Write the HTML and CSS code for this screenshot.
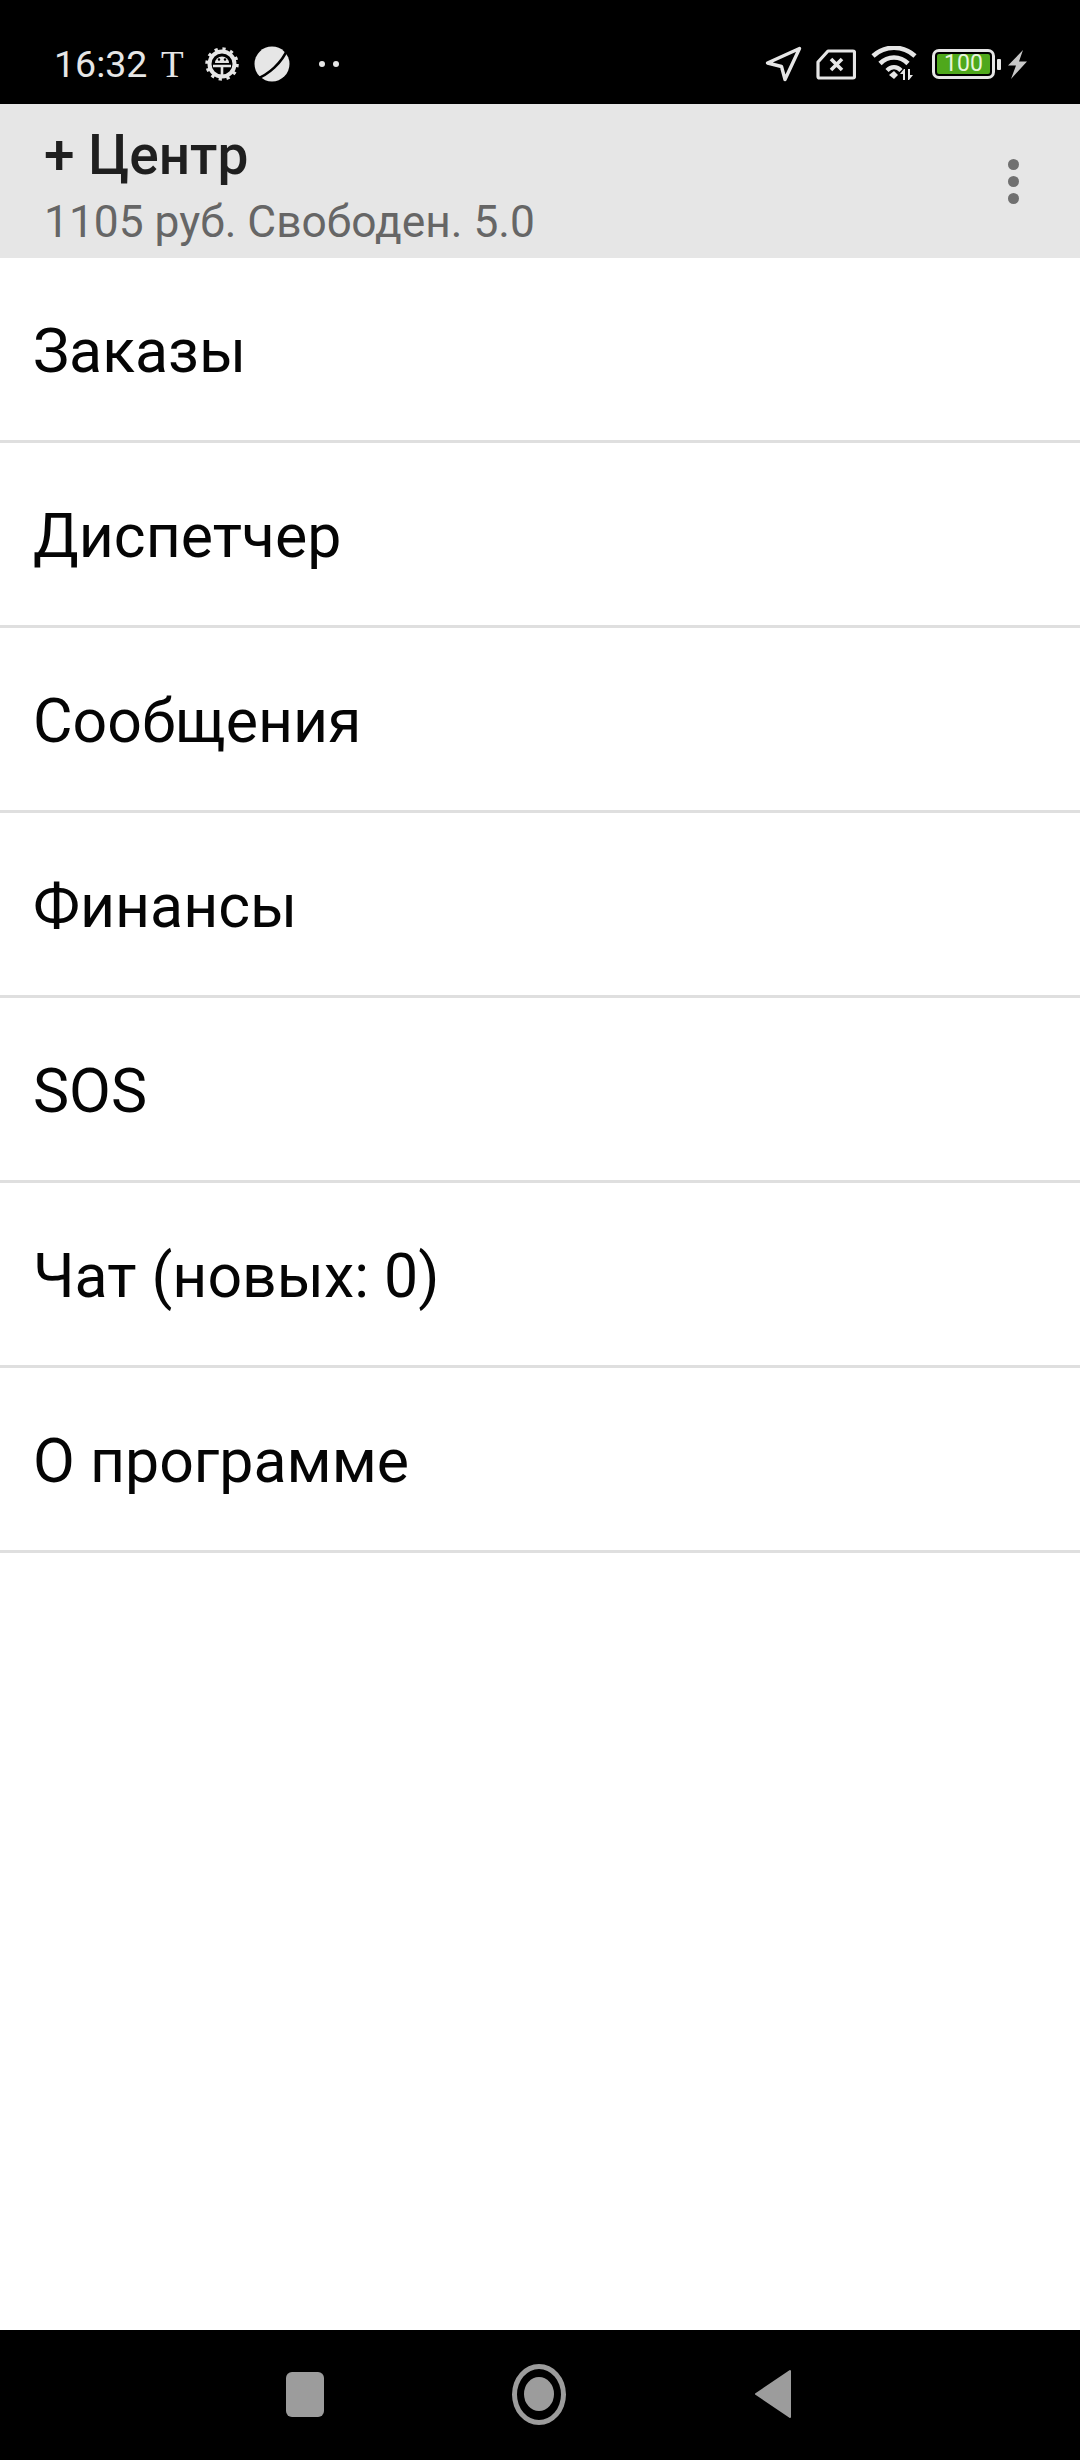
FILE: index.html
```html
<!DOCTYPE html>
<html lang="ru">
<head>
  <meta charset="UTF-8" />
  <title>Центр</title>
  <link rel="stylesheet" href="styles.css">
</head>
<body>
  <div class="phone">
    <div class="status-bar">
      <div class="status-left">
        <span class="clock">16:32</span>
        <span class="t-icon">T</span>
        <svg class="ic-gear" width="34" height="34" viewBox="1 1 34 34">
          <circle cx="18" cy="18" r="12.5" fill="none" stroke="#e6e6e6" stroke-width="4"/>
          <circle cx="18" cy="18" r="15" fill="none" stroke="#e6e6e6" stroke-width="3.5" stroke-dasharray="3.2 4.65"/>
          <path d="M9 20h18M18 20v10" stroke="#e6e6e6" stroke-width="2.6" fill="none"/>
          <path d="M11 17a7 6.5 0 0 1 14 0z" fill="#e6e6e6"/>
          <circle cx="15" cy="13.5" r="1.2" fill="#000"/>
          <circle cx="21" cy="13.5" r="1.2" fill="#000"/>
        </svg>
        <svg class="ic-planet" width="36" height="36" viewBox="0 0 36 36">
          <circle cx="18" cy="18" r="17.500" fill="#e6e6e6"/>
          <path d="M2 33 C14 29 28 17 34 2" stroke="#000" stroke-width="2.600" fill="none"/>
        </svg>
        <span class="dots"><i></i><i></i></span>
      </div>
      <div class="status-right">
        <svg class="ic-nav" width="37" height="36" viewBox="0 0 37 36">
          <path d="M2.500 17 L34.500 2.500 L20 33.500 L16.500 20.500 Z" fill="none" stroke="#e6e6e6" stroke-width="3.400" stroke-linejoin="round"/>
        </svg>
        <svg class="ic-sim" width="40" height="31" viewBox="0 0 40 31">
          <path d="M12 2 H37 a1.500 1.500 0 0 1 1.500 1.500 V27.500 a1.500 1.500 0 0 1 -1.500 1.500 H3.500 a1.500 1.500 0 0 1 -1.500 -1.500 V13 Z" fill="none" stroke="#e6e6e6" stroke-width="3.200" stroke-linejoin="round"/>
          <path d="M15 10 L26 21 M26 10 L15 21" stroke="#e6e6e6" stroke-width="3.600"/>
        </svg>
        <svg class="ic-wifi" width="46" height="36" viewBox="0 0 46 36">
          <path d="M2 10 C14 -1 32 -1 44 10" fill="none" stroke="#e6e6e6" stroke-width="4.600"/>
          <path d="M9 17.500 C17 9.500 29 9.500 37 17.500" fill="none" stroke="#e6e6e6" stroke-width="4.600"/>
          <path d="M16 24.500 C20 20 26 20 30 24.500" fill="none" stroke="#e6e6e6" stroke-width="4.200"/>
          <path d="M18 29 L23 25 L27 29 L23 33 Z" fill="#e6e6e6"/>
          <path d="M33 23 L29 28 H32 V34 H34 V23 Z M38 34 L42 29 H39 V23 H37 V34 Z" fill="#e6e6e6"/>
        </svg>
        <div class="battery">
          <div class="battery-body"><span class="battery-level">100</span></div>
          <div class="battery-cap"></div>
        </div>
        <svg class="ic-bolt" width="19" height="29" viewBox="0 0 19 29">
          <path d="M15 0 L0 15.500 H8 L3 29 L19 11.500 H11 Z" fill="#c8c8c8"/>
        </svg>
      </div>
    </div>

    <header class="app-bar">
      <div class="app-titles">
        <div class="app-title">+ Центр</div>
        <div class="app-subtitle">1105 руб. Свободен. 5.0</div>
      </div>
      <div class="overflow"><i></i><i></i><i></i></div>
    </header>

    <ul class="menu">
      <li>Заказы</li>
      <li>Диспетчер</li>
      <li>Сообщения</li>
      <li>Финансы</li>
      <li>SOS</li>
      <li>Чат (новых: 0)</li>
      <li>О программе</li>
    </ul>

    <nav class="nav-bar">
      <div class="nav-square"></div>
      <div class="nav-home"><div class="nav-home-dot"></div></div>
      <svg class="nav-back" width="38" height="50" viewBox="0 0 38 50">
        <path d="M36 2 V48 L2 25 Z" fill="#9c9c9c" stroke="#9c9c9c" stroke-width="2" stroke-linejoin="round"/>
      </svg>
    </nav>
  </div>
</body>
</html>
```

FILE: styles.css
```css
* { box-sizing: border-box; }
body { margin: 0; background: #fff; font-family: Roboto, "Liberation Sans", sans-serif; }
.phone { width: 1080px; height: 2460px; display: flex; flex-direction: column; overflow: hidden; }

.status-bar { height: 104px; background: #000; display: flex; justify-content: space-between; align-items: center; padding: 24px 53px 0 54px; color: #e6e6e6; flex-shrink: 0; }
.status-left { display: flex; align-items: center; }
.status-right { display: flex; align-items: center; }
.clock { font-size: 37.5px; width: 107px; }
.t-icon { font-family: "Liberation Serif", serif; font-size: 37px; width: 44px; }
.ic-planet { margin-left: 15px; }
.dots { display: flex; gap: 8px; margin-left: 29px; }
.dots i { display: block; width: 6px; height: 6px; border-radius: 50%; background: #e6e6e6; }

.ic-sim { margin-left: 14px; }
.ic-wifi { margin-left: 15px; }
.battery { display: flex; align-items: center; margin-left: 15px; }
.battery-body { width: 63px; height: 30px; border: 3px solid #e6e6e6; border-radius: 7px; padding: 2px; }
.battery-level { display: block; height: 100%; background: #4fa81c; border-radius: 2px; color: #e8f5dc; font-size: 23px; line-height: 20px; text-align: center; }
.battery-cap { width: 4px; height: 11px; margin-left: 2px; background: #e6e6e6; border-radius: 1px; }
.ic-bolt { margin-left: 7px; }

.app-bar { height: 154px; background: #e6e6e6; display: flex; justify-content: space-between; padding: 21px 26px 0 44px; flex-shrink: 0; }
.app-title { font-size: 55px; font-weight: 500; line-height: 60px; color: #1f1f1f; }
.app-subtitle { font-size: 44.3px; line-height: 50px; margin-top: 12px; color: #666; }
.overflow { display: flex; flex-direction: column; gap: 6px; padding: 34px 0 0; width: 24px; margin-right: 22px; }
.overflow i { display: block; width: 11px; height: 11px; border-radius: 50%; background: #707070; }

.menu { list-style: none; margin: 0; padding: 0; flex: 1; }
.menu li { height: 185px; display: flex; align-items: center; padding: 5px 33px 0; border-bottom: 3px solid #dfdfdf; font-size: 60.8px; color: #050505; }

.nav-bar { height: 130px; background: #000; display: flex; align-items: center; flex-shrink: 0; padding: 0 0 2px 286px; }
.nav-square { width: 38px; height: 45px; border-radius: 6px; background: #9c9c9c; }
.nav-home { width: 54px; height: 61px; margin-left: 188px; border: 5px solid #9c9c9c; border-radius: 50%; display: flex; align-items: center; justify-content: center; }
.nav-home-dot { width: 30px; height: 34px; border-radius: 50%; background: #9c9c9c; }
.nav-back { margin-left: 188px; }
```
